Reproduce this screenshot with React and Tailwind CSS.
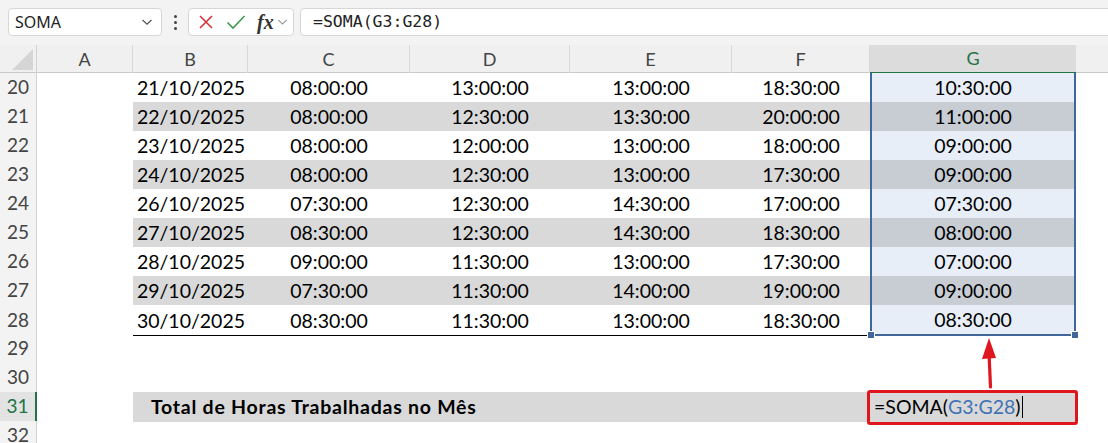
import React from "react";

const GRID = "grid grid-cols-[37px_96px_115px_162px_160px_162px_138px_206px_1fr]";
const CELL_FONT = { fontFamily: "Lato, 'Noto Sans', sans-serif" };

const rows = [
  [20, "21/10/2025", "08:00:00", "13:00:00", "13:00:00", "18:30:00", "10:30:00"],
  [21, "22/10/2025", "08:00:00", "12:30:00", "13:30:00", "20:00:00", "11:00:00"],
  [22, "23/10/2025", "08:00:00", "12:00:00", "13:00:00", "18:00:00", "09:00:00"],
  [23, "24/10/2025", "08:00:00", "12:30:00", "13:00:00", "17:30:00", "09:00:00"],
  [24, "26/10/2025", "07:30:00", "12:30:00", "14:30:00", "17:00:00", "07:30:00"],
  [25, "27/10/2025", "08:30:00", "12:30:00", "14:30:00", "18:30:00", "08:00:00"],
  [26, "28/10/2025", "09:00:00", "11:30:00", "13:00:00", "17:30:00", "07:00:00"],
  [27, "29/10/2025", "07:30:00", "11:30:00", "14:00:00", "19:00:00", "09:00:00"],
  [28, "30/10/2025", "08:30:00", "11:30:00", "13:00:00", "18:30:00", "08:30:00"],
];

function Chevron({ className }) {
  return (
    <svg viewBox="0 0 12 8" className={className} fill="none" stroke="currentColor" strokeWidth="1.3">
      <path d="M1.5 2 L6 6.2 L10.5 2" />
    </svg>
  );
}

function RowHead({ n, active }) {
  return (
    <div
      className={
        "flex items-center justify-center text-[19px] border-b border-[#e4e4e4] " +
        (active
          ? "bg-[#e3e3e3] text-[#217346] border-r-2 border-r-[#217346]"
          : "bg-[#f3f3f3] text-[#444] border-r border-r-[#d2d2d2]")
      }
      style={CELL_FONT}
    >
      {n}
    </div>
  );
}

function TopBar() {
  return (
    <div className="h-[45px] bg-[#f3f3f3] flex items-start pt-[8px] pl-[8px]">
      <div className="w-[154px] h-[28px] bg-white border border-[#d6d6d6] rounded-[4px] flex items-center pl-[6px] pr-[8px]">
        <span className="text-[16px] text-[#222] flex-1" style={{ fontFamily: "'Noto Sans', sans-serif" }}>SOMA</span>
        <Chevron className="w-[12px] h-[8px] text-[#555]" />
      </div>
      <div className="w-[26px] h-[28px] flex flex-col items-center justify-center gap-[3px]">
        <span className="w-[3px] h-[3px] rounded-full bg-[#444]" />
        <span className="w-[3px] h-[3px] rounded-full bg-[#444]" />
        <span className="w-[3px] h-[3px] rounded-full bg-[#444]" />
      </div>
      <div className="w-[106px] h-[28px] bg-white border border-[#d6d6d6] rounded-[4px] flex items-center pl-[9px]">
        <svg viewBox="0 0 16 16" className="w-[16px] h-[16px]" fill="none" stroke="#d13438" strokeWidth="1.6">
          <path d="M2 2 L14 14 M14 2 L2 14" />
        </svg>
        <svg viewBox="0 0 20 16" className="w-[20px] h-[16px] ml-[12px]" fill="none" stroke="#3c9a4f" strokeWidth="1.6">
          <path d="M1.5 8.5 L7 14 L18.5 2" />
        </svg>
        <span
          className="ml-[11px] text-[20px] italic font-bold text-[#333] leading-none"
          style={{ fontFamily: "'Liberation Serif', serif" }}
        >
          fx
        </span>
        <Chevron className="w-[11px] h-[8px] text-[#999] ml-[3px]" />
      </div>
      <div className="flex-1 h-[28px] ml-[6px] -mr-[10px] bg-white border border-[#d6d6d6] rounded-[4px] flex items-center pl-[12px]">
        <span className="text-[16.5px] text-[#222]" style={{ fontFamily: "'DejaVu Sans Mono', monospace" }}>
          =SOMA(G3:G28)
        </span>
      </div>
    </div>
  );
}

function HeaderRow() {
  const letters = ["A", "B", "C", "D", "E", "F"];
  return (
    <div className={GRID + " h-[28px] bg-[#f0f0f0] border-b border-[#c9c9c9] text-[18px] text-[#444]"} style={CELL_FONT}>
      <div className="flex items-end justify-end pr-[3px] pb-[3px] border-r border-[#d2d2d2]">
        <svg viewBox="0 0 22 22" className="w-[21px] h-[21px]">
          <polygon points="22,0 22,22 0,22" fill="#d5d5d5" />
        </svg>
      </div>
      {letters.map((l) => (
        <div key={l} className="flex items-center justify-center border-r border-[#d8d8d8]">
          {l}
        </div>
      ))}
      <div className="flex items-center justify-center bg-[#dcdcdc] text-[#217346] border-b-2 border-[#217346] -mb-[1px]">G</div>
      <div />
    </div>
  );
}

function DataRow({ r, idx, last }) {
  const [n, b, c, d, e, f, g] = r;
  const gray = idx % 2 === 1;
  const bg = gray ? "bg-[#d9d9d9]" : "bg-white";
  const bottom = last ? " border-b border-black" : "";
  return (
    <div className={GRID + " h-[29px] text-[19.5px] text-black"} style={CELL_FONT}>
      <RowHead n={n} />
      <div className="bg-white" />
      <div className={"flex items-center justify-end pr-[3px] " + bg + bottom}>{b}</div>
      <div className={"flex items-center justify-center " + bg + bottom}>{c}</div>
      <div className={"flex items-center justify-center " + bg + bottom}>{d}</div>
      <div className={"flex items-center justify-center " + bg + bottom}>{e}</div>
      <div className={"flex items-center justify-center " + bg + bottom}>{f}</div>
      <div
        className={
          "relative flex items-center justify-center border-x-2 border-[#41679a] " +
          (gray ? "bg-[#c8cdd4]" : "bg-[#e8eef8]") +
          (last ? " border-b-2" : "")
        }
      >
        {g}
        {last && (
          <>
            <span className="absolute -left-[5px] -bottom-[5px] w-[8px] h-[8px] bg-[#41679a] border border-white" />
            <span className="absolute -right-[5px] -bottom-[5px] w-[8px] h-[8px] bg-[#41679a] border border-white" />
          </>
        )}
      </div>
      <div className="bg-white" />
    </div>
  );
}

function EmptyRow({ n, children }) {
  return (
    <div className={GRID + " h-[29px]"}>
      <RowHead n={n} />
      <div className="col-span-6" />
      <div className="relative">{children}</div>
      <div />
    </div>
  );
}

export default function App() {
  return (
    <div className="w-[1108px] h-[443px] overflow-hidden bg-white">
      <TopBar />
      <HeaderRow />
      {rows.map((r, i) => (
        <DataRow key={r[0]} r={r} idx={i} last={i === rows.length - 1} />
      ))}
      <EmptyRow n={29}>
        <svg viewBox="0 0 20 52" className="absolute left-[109px] top-[3px] w-[20px] h-[52px] overflow-visible">
          <path d="M11.5 50 L10 16" stroke="#e0161e" strokeWidth="3.2" strokeLinecap="round" fill="none" />
          <polygon points="3,22 10,1 17,21" fill="#e0161e" />
        </svg>
      </EmptyRow>
      <EmptyRow n={30} />
      <div className={GRID + " h-[29px] text-[19.5px] text-black"} style={CELL_FONT}>
        <RowHead n={31} active />
        <div />
        <div className="col-span-5 bg-[#d9d9d9] flex items-center pl-[18px] font-bold tracking-[0.75px] whitespace-nowrap">
          Total de Horas Trabalhadas no Mês
        </div>
        <div className="relative bg-[#d9d9d9] flex items-center pl-[4px] whitespace-nowrap">
          <span>=SOMA(</span>
          <span className="text-[#3f72b5]">G3:G28</span>
          <span>)</span>
          <span className="w-[1px] h-[22px] bg-black ml-[1px]" />
          <div className="absolute -left-[3px] -right-[2px] -top-[2px] -bottom-[3px] border-[3.5px] border-[#e0161e] rounded-[3px]" />
        </div>
        <div />
      </div>
      <EmptyRow n={32} />
    </div>
  );
}
